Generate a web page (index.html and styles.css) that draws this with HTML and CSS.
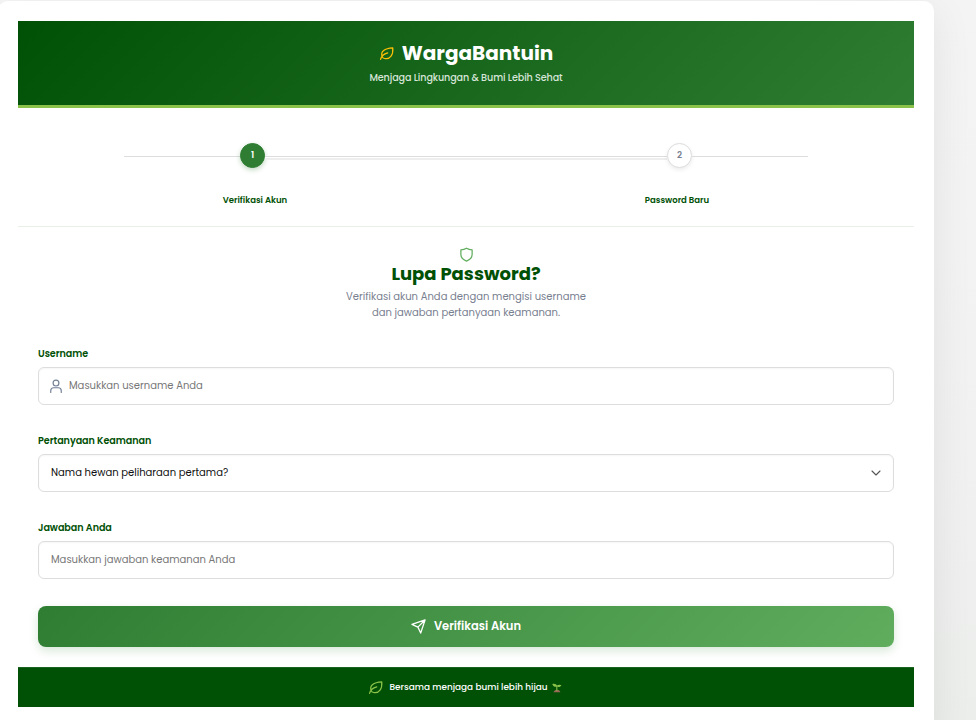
FILE: index.html
```html
<!DOCTYPE html>
<html lang="id">
<head>
<meta charset="utf-8">
<title>WargaBantuin - Lupa Password</title>
<link rel="stylesheet" href="styles.css">
</head>
<body>
<main class="card">
  <header class="brand">
    <h1><svg class="leaf" viewBox="0 0 24 24"><path d="M2.500 21.500C4 15 8 12.500 14 11M5 17C2 8 9 4 22 3C23 14 18 22 9 20C7 19.500 5.500 18.500 5 17Z"/></svg><span>WargaBantuin</span></h1>
    <p>Menjaga Lingkungan &amp; Bumi Lebih Sehat</p>
  </header>
  <section class="steps">
    <div class="track">
      <span class="line"></span><span class="dot active">1</span><span class="line double"></span><span class="dot">2</span><span class="line"></span>
    </div>
    <div class="step-labels"><span>Verifikasi Akun</span><span>Password Baru</span></div>
  </section>
  <section class="intro">
    <svg class="shield" viewBox="0 0 24 24"><path d="M12 2C9 4 6 4.500 3 4.500V12C3 17.500 7 20.500 12 22.500C17 20.500 21 17.500 21 12V4.500C18 4.500 15 4 12 2Z"/></svg>
    <h2>Lupa Password?</h2>
    <p>Verifikasi akun Anda dengan mengisi username<br>dan jawaban pertanyaan keamanan.</p>
  </section>
  <form>
    <div class="field">
      <label>Username</label>
      <div class="control">
        <svg class="user" viewBox="0 0 24 24"><circle cx="12" cy="7" r="5"/><path d="M3 23V20C3 17 5 15 8 15H16C19 15 21 17 21 20V23"/></svg>
        <span class="hint">Masukkan username Anda</span>
      </div>
    </div>
    <div class="field">
      <label>Pertanyaan Keamanan</label>
      <div class="control">
        <span class="value">Nama hewan peliharaan pertama?</span>
        <svg class="chevron" viewBox="0 0 10 6"><path d="M1 1L5 5L9 1"/></svg>
      </div>
    </div>
    <div class="field">
      <label>Jawaban Anda</label>
      <div class="control"><span class="hint">Masukkan jawaban keamanan Anda</span></div>
    </div>
    <button type="button"><svg class="send" viewBox="0 0 24 24"><path d="M22.500 1.500L1.500 8.500L11 13L15.500 22.500ZM22.500 1.500L11 13"/></svg><span>Verifikasi Akun</span></button>
  </form>
  <footer><svg class="leaf" viewBox="0 0 24 24"><path d="M2.500 21.500C4 15 8 12.500 14 11M5 17C2 8 9 4 22 3C23 14 18 22 9 20C7 19.500 5.500 18.500 5 17Z"/></svg><span>Bersama menjaga bumi lebih hijau</span><svg class="seedling" viewBox="0 0 10 10"><path class="soil" d="M1.500 9.300C2.500 7.500 3.500 6.800 5 6.800S7.500 7.500 8.500 9.300Z"/><path class="stem" d="M4.800 7.500V3.500"/><path class="sprout" d="M5 3.600C3 4.200 1 3.200.300.900C2.500.300 4.300 1 5 2.600C6 1.500 8 1.300 9.500 2.200C8.500 4 6.500 4.400 5 3.600Z"/></svg></footer>
</main>
</body>
</html>
```

FILE: styles.css
```css
* { box-sizing: border-box; }
html { height: 100%; overflow: hidden; }
body {
  margin: 0;
  height: 720px;
  overflow: hidden;
  padding-top: 1px;
  background: linear-gradient(160deg, #f5f5f5 0%, #f3f3f3 55%, #eceeec 100%);
  font-family: Poppins, Inter, sans-serif;
  font-size: 10.03px;
}
svg { fill: none; stroke: currentColor; stroke-width: 2; stroke-linejoin: round; stroke-linecap: round; flex: none; }
h1, h2, p { margin: 0; }
span, label { white-space: nowrap; }
.card {
  width: 936px;
  height: 740px;
  margin-left: -2px;
  padding: 20px;
  background: #fff;
  border-radius: 10px;
  box-shadow: 0 10px 40px rgba(0, 0, 0, .08);
}
.brand {
  height: 87px;
  padding-top: 15px;
  border-bottom: 3px solid #8bc34a;
  background: linear-gradient(135deg, #005005, #2e7d32);
  color: #fff;
  text-align: center;
}
.brand h1 { display: flex; align-items: center; justify-content: center; gap: 8px; height: 33px; font-size: 20px; font-weight: 700; }
.leaf { width: 15px; height: 15px; }
.brand .leaf { margin-top: 1px; color: #ffc107; }
.brand p { height: 18px; line-height: 18px; font-size: 9.6px; letter-spacing: -.11px; font-weight: 500; color: #d7e5d8; }
.steps { height: 119px; padding-top: 35px; border-bottom: 1px solid #e8f0e8; }
.track { display: flex; align-items: center; width: 684px; height: 25px; margin: 0 auto; }
.line { width: 116px; height: 1px; background: #ddd; margin-top: 1px; }
.line.double { flex: 1; height: 4px; margin-top: 4px; background: linear-gradient(#ddd 1px, #fff 1px, #fff 2px, #eee 2px); }
.dot {
  display: flex;
  align-items: center;
  justify-content: center;
  width: 25px;
  height: 25px;
  border: 1px solid #ddd;
  border-radius: 50%;
  background: #fff;
  color: #78808f;
  font-size: 8.8px;
  font-weight: 600;
  box-shadow: 0 2px 4px rgba(0, 0, 0, .08);
}
.dot.active { border-color: #2e7d32; background: #2e7d32; color: #fff; box-shadow: 0 2px 5px rgba(46, 125, 50, .3); }
.step-labels { display: grid; grid-template-columns: 422px 422px; justify-content: center; margin-top: 25px; text-align: center; line-height: 14px; font-size: 8.5px; font-weight: 600; color: #005005; }
.intro { height: 120px; padding-top: 20px; text-align: center; }
.shield { display: block; width: 15px; height: 15px; margin: 0 auto; color: #60ad5e; }
.intro h2 { height: 24px; line-height: 24px; font-size: 18px; font-weight: 700; color: #005005; }
.intro p { margin-top: 3px; line-height: 16px; color: #78808f; }
form { height: 320px; padding: 0 20px; }
.field { height: 87px; }
label { display: block; height: 20px; line-height: 14px; font-size: 9.6px; letter-spacing: -.05px; font-weight: 600; color: #005005; }
.control { display: flex; align-items: center; height: 38px; padding: 0 12px; border: 1px solid #ddd; border-radius: 6px; background: #fff; box-shadow: inset 0 1px 2px rgba(0, 0, 0, .04); }
.control span { line-height: 16px; }
.user { width: 14px; height: 14px; margin: 0 6px 0 -2px; color: #718096; }
.hint { color: #777; }
.value { color: #111; }
.chevron { width: 10px; height: 6px; margin-left: auto; color: #555; stroke-width: 1.1; }
button {
  display: flex;
  align-items: center;
  justify-content: center;
  gap: 8px;
  width: 100%;
  height: 41px;
  margin-top: -2px;
  padding: 0 0 1px;
  border: 0;
  border-radius: 8px;
  background: linear-gradient(135deg, #2e7d32, #60ad5e);
  color: #fff;
  font: 600 11.5px Poppins, Inter, sans-serif;
  box-shadow: 0 4px 10px rgba(46, 125, 50, .18);
}
.send { width: 15px; height: 15px; }
footer { display: flex; align-items: center; justify-content: center; height: 40px; border-top: 1px solid #1b641f; background: #005005; color: #fff; font-size: 8.9px; font-weight: 500; }
footer .leaf { margin-right: 6px; color: #8bc34a; }
.seedling { width: 10px; height: 10px; margin: 0 2px 0 4px; stroke: none; }
.soil { fill: #9a6658; }
.stem { stroke: #7cb342; stroke-width: 1.2; }
.sprout { fill: #8bc34a; }
```
